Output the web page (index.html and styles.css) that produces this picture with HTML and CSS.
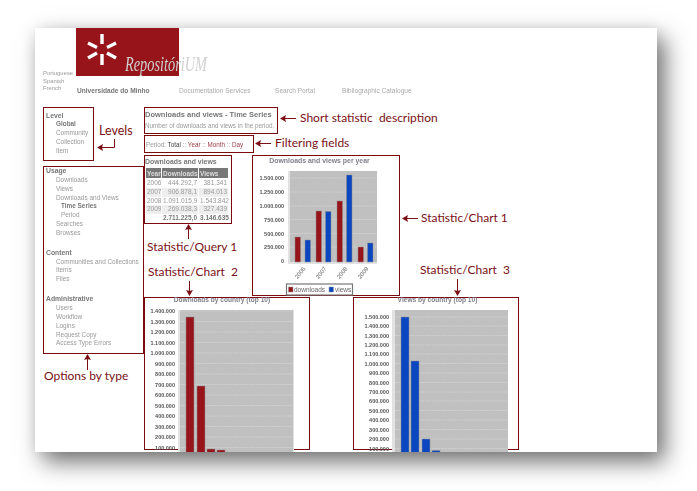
FILE: index.html
```html
<!DOCTYPE html>
<html lang="en">
<head>
    <meta charset="UTF-8">
    <title>Statistics add-on - Downloads and views</title>
    <link rel="stylesheet" href="styles.css">
</head>
<body>

<div class="sheet">

    <div class="header shot">
        <div class="langs">
            <div>Portuguese</div>
            <div>Spanish</div>
            <div>French</div>
        </div>
        <div class="brand">
            <div class="logo"></div>
            <div class="nav">
                <span class="nav-home">Universidade do Minho</span>
                <span class="nav-docs">Documentation Services</span>
                <span class="nav-search">Search Portal</span>
                <span>Bibliographic Catalogue</span>
            </div>
        </div>
    </div>

    <!-- logo drawn over the header, the wordmark runs past the red block -->
    <svg class="logo-mark shot" viewBox="76 28 170 50">
        <g stroke="#fff" stroke-width="3.400" stroke-linecap="butt">
            <line x1="102" y1="34" x2="102" y2="44"/>
            <line x1="102" y1="54" x2="102" y2="65"/>
            <line x1="88" y1="43" x2="97" y2="47.500"/>
            <line x1="116" y1="43" x2="107" y2="47.500"/>
            <line x1="88" y1="58" x2="97" y2="53"/>
            <line x1="116" y1="58" x2="107" y2="53"/>
        </g>
        <text class="logo-word" x="125" y="71" textLength="82" lengthAdjust="spacingAndGlyphs">RepositóriUM</text>
    </svg>

    <div class="content">
        <div class="side">
            <div class="box levels">
                <div class="menu shot">
                    <h4>Level</h4>
                    <a class="on">Global</a>
                    <a>Community</a>
                    <a>Collection</a>
                    <a>Item</a>
                </div>
            </div>
            <div class="box options">
                <div class="menu shot">
                    <h4>Usage</h4>
                    <a>Downloads</a>
                    <a>Views</a>
                    <a>Downloads and Views</a>
                    <a class="sub on">Time Series</a>
                    <a class="sub">Period</a>
                    <a>Searches</a>
                    <a>Browses</a>
                    <h4 class="next">Content</h4>
                    <a>Communities and Collections</a>
                    <a>Items</a>
                    <a>Files</a>
                    <h4 class="next">Administrative</h4>
                    <a>Users</a>
                    <a>Workflow</a>
                    <a>Logins</a>
                    <a>Request Copy</a>
                    <a>Access Type Errors</a>
                </div>
            </div>
        </div>

        <div class="main">
            <div class="box desc">
                <div class="shot">
                    <h3>Downloads and views - Time Series</h3>
                    <p>Number of downloads and views in the period.</p>
                </div>
            </div>
            <div class="box filter">
                <div class="shot">Period: <b>Total</b> :: <a>Year</a> :: <a>Month</a> :: <a>Day</a></div>
            </div>

            <div class="row row-top">
                <div class="box query">
                    <div class="shot">
                        <h3>Downloads and views</h3>
                        <table>
                            <tr><th class="c-year">Year</th><th class="c-down">Downloads</th><th class="c-views">Views</th></tr>
                            <tr><td>2006</td><td class="num">444.292,7</td><td class="num">381.341</td></tr>
                            <tr class="alt"><td>2007</td><td class="num">906.878,1</td><td class="num">894.013</td></tr>
                            <tr><td>2008</td><td class="num">1.091.015,9</td><td class="num">1.543.842</td></tr>
                            <tr class="alt"><td>2009</td><td class="num">269.038,3</td><td class="num">327.439</td></tr>
                            <tr class="total"><td></td><td class="num">2.711.225,0</td><td class="num">3.146.635</td></tr>
                        </table>
                    </div>
                </div>

                <div class="box chart-year">
                    <svg class="chart shot" viewBox="253 156 146 139">
                        <text class="chart-title title-year" x="319.500" y="163" text-anchor="middle">Downloads and views per year</text>
                        <rect class="axis-band" x="288" y="171" width="89" height="93"/>
                        <rect class="plot" x="290" y="171" width="87" height="91"/>
                        <g class="grid">
                            <line x1="290" x2="377" y1="178" y2="178"/>
                            <line x1="290" x2="377" y1="192" y2="192"/>
                            <line x1="290" x2="377" y1="206" y2="206"/>
                            <line x1="290" x2="377" y1="219.500" y2="219.500"/>
                            <line x1="290" x2="377" y1="233.500" y2="233.500"/>
                            <line x1="290" x2="377" y1="247" y2="247"/>
                        </g>
                        <g class="ticks" text-anchor="end">
                            <text x="284" y="180">1.500.000</text>
                            <text x="284" y="194">1.250.000</text>
                            <text x="284" y="208">1.000.000</text>
                            <text x="284" y="221.500">750.000</text>
                            <text x="284" y="235.500">500.000</text>
                            <text x="284" y="249">250.000</text>
                            <text x="284" y="263">0</text>
                        </g>
                        <g class="bar-red">
                            <rect x="295" y="237" width="5.500" height="25"/>
                            <rect x="316" y="211" width="5.500" height="51"/>
                            <rect x="337" y="201" width="5.500" height="61"/>
                            <rect x="358" y="247" width="5.500" height="15"/>
                        </g>
                        <g class="bar-blue">
                            <rect x="305" y="240" width="5.500" height="22"/>
                            <rect x="325.500" y="211.500" width="5.500" height="50.500"/>
                            <rect x="346.500" y="175" width="5.500" height="87"/>
                            <rect x="367.500" y="243" width="5.500" height="19"/>
                        </g>
                        <g class="years" text-anchor="end">
                            <text transform="translate(306 269) rotate(-50)">2006</text>
                            <text transform="translate(327 269) rotate(-50)">2007</text>
                            <text transform="translate(348 269) rotate(-50)">2008</text>
                            <text transform="translate(369 269) rotate(-50)">2009</text>
                        </g>
                        <rect class="legend" x="286.500" y="284" width="66" height="11"/>
                        <rect class="bar-red" x="288.500" y="287" width="4.500" height="5"/>
                        <text class="legend-text" x="294" y="292">downloads</text>
                        <rect class="bar-blue" x="329" y="287" width="4.500" height="5"/>
                        <text class="legend-text" x="335" y="292">views</text>
                    </svg>
                </div>
            </div>

            <div class="row row-bottom">
                <div class="box chart-country">
                    <svg class="chart shot" viewBox="145 298 164 152">
                        <text class="chart-title" x="222" y="302" text-anchor="middle">Downloads by country (top 10)</text>
                        <rect class="axis-band" x="178" y="310" width="116" height="145"/>
                        <rect class="plot" x="180" y="310" width="113" height="145"/>
                        <g class="grid">
                            <line x1="180" x2="293" y1="311" y2="311"/>
                            <line x1="180" x2="293" y1="321.500" y2="321.500"/>
                            <line x1="180" x2="293" y1="332" y2="332"/>
                            <line x1="180" x2="293" y1="342.500" y2="342.500"/>
                            <line x1="180" x2="293" y1="353" y2="353"/>
                            <line x1="180" x2="293" y1="363.500" y2="363.500"/>
                            <line x1="180" x2="293" y1="374" y2="374"/>
                            <line x1="180" x2="293" y1="384.500" y2="384.500"/>
                            <line x1="180" x2="293" y1="395" y2="395"/>
                            <line x1="180" x2="293" y1="405.500" y2="405.500"/>
                            <line x1="180" x2="293" y1="416" y2="416"/>
                            <line x1="180" x2="293" y1="426.500" y2="426.500"/>
                            <line x1="180" x2="293" y1="437" y2="437"/>
                            <line x1="180" x2="293" y1="447.500" y2="447.500"/>
                        </g>
                        <g class="ticks" text-anchor="end">
                            <text x="175" y="313">1.400.000</text>
                            <text x="175" y="323.500">1.300.000</text>
                            <text x="175" y="334">1.200.000</text>
                            <text x="175" y="344.500">1.100.000</text>
                            <text x="175" y="355">1.000.000</text>
                            <text x="175" y="365.500">900.000</text>
                            <text x="175" y="376">800.000</text>
                            <text x="175" y="386.500">700.000</text>
                            <text x="175" y="397">600.000</text>
                            <text x="175" y="407.500">500.000</text>
                            <text x="175" y="418">400.000</text>
                            <text x="175" y="428.500">300.000</text>
                            <text x="175" y="439">200.000</text>
                            <text x="175" y="449.500">100.000</text>
                        </g>
                        <g class="bar-red">
                            <rect x="186" y="317" width="8" height="140"/>
                            <rect x="197" y="386" width="8" height="70"/>
                            <rect x="207" y="449" width="8" height="7"/>
                            <rect x="217" y="450" width="8" height="6"/>
                        </g>
                    </svg>
                </div>

                <div class="box chart-country">
                    <svg class="chart shot" viewBox="354 298 164 152">
                        <text class="chart-title" x="437.500" y="302" text-anchor="middle">Views by country (top 10)</text>
                        <rect class="axis-band" x="392" y="310" width="116" height="145"/>
                        <rect class="plot" x="395" y="310" width="113" height="145"/>
                        <g class="grid">
                            <line x1="395" x2="508" y1="317" y2="317"/>
                            <line x1="395" x2="508" y1="326" y2="326"/>
                            <line x1="395" x2="508" y1="335.500" y2="335.500"/>
                            <line x1="395" x2="508" y1="345" y2="345"/>
                            <line x1="395" x2="508" y1="354" y2="354"/>
                            <line x1="395" x2="508" y1="363.500" y2="363.500"/>
                            <line x1="395" x2="508" y1="373" y2="373"/>
                            <line x1="395" x2="508" y1="382.500" y2="382.500"/>
                            <line x1="395" x2="508" y1="392" y2="392"/>
                            <line x1="395" x2="508" y1="401" y2="401"/>
                            <line x1="395" x2="508" y1="410.500" y2="410.500"/>
                            <line x1="395" x2="508" y1="420" y2="420"/>
                            <line x1="395" x2="508" y1="429.500" y2="429.500"/>
                            <line x1="395" x2="508" y1="439" y2="439"/>
                            <line x1="395" x2="508" y1="448.500" y2="448.500"/>
                        </g>
                        <g class="ticks" text-anchor="end">
                            <text x="389" y="319">1.500.000</text>
                            <text x="389" y="328">1.400.000</text>
                            <text x="389" y="337.500">1.300.000</text>
                            <text x="389" y="347">1.200.000</text>
                            <text x="389" y="356">1.100.000</text>
                            <text x="389" y="365.500">1.000.000</text>
                            <text x="389" y="375">900.000</text>
                            <text x="389" y="384.500">800.000</text>
                            <text x="389" y="394">700.000</text>
                            <text x="389" y="403">600.000</text>
                            <text x="389" y="412.500">500.000</text>
                            <text x="389" y="422">400.000</text>
                            <text x="389" y="431.500">300.000</text>
                            <text x="389" y="441">200.000</text>
                            <text x="389" y="450.500">100.000</text>
                        </g>
                        <g class="bar-blue">
                            <rect x="401" y="317" width="8" height="140"/>
                            <rect x="411" y="361" width="8" height="95"/>
                            <rect x="422" y="439" width="8" height="17"/>
                            <rect x="432" y="450.500" width="8" height="6"/>
                        </g>
                    </svg>
                </div>
            </div>
        </div>
    </div>

    <!-- callouts drawn on top of the screenshot -->
    <svg class="notes" viewBox="35 28 622 424">
        <text x="99" y="135" class="note-big">Levels</text>
        <text x="300" y="122">Short statistic &#160;description</text>
        <text x="275" y="147">Filtering fields</text>
        <text x="421" y="222">Statistic/Chart 1</text>
        <text x="147" y="251">Statistic/Query 1</text>
        <text x="148" y="276">Statistic/Chart &#160;2</text>
        <text x="420" y="274">Statistic/Chart &#160;3</text>
        <text x="44" y="380">Options by type</text>

        <path class="wire" d="M114.500 139V147.500H100"/>
        <path class="head" d="M97 147.500l6-3.500-1 3.500 1 3.500z"/>

        <path class="wire" d="M284 118.500H296"/>
        <path class="head" d="M280 118.500l6-3.500-1 3.500 1 3.500z"/>

        <path class="wire" d="M259 143.500H271"/>
        <path class="head" d="M255 143.500l6-3.500-1 3.500 1 3.500z"/>

        <path class="wire" d="M406 218.500H418"/>
        <path class="head" d="M402 218.500l6-3.500-1 3.500 1 3.500z"/>

        <path class="wire" d="M188.500 228V239"/>
        <path class="head" d="M188.500 224l3.500 6-3.500-1-3.500 1z"/>

        <path class="wire" d="M87.500 358V370"/>
        <path class="head" d="M87.500 354l3.500 6-3.500-1-3.500 1z"/>

        <path class="wire" d="M189.500 281V292"/>
        <path class="head" d="M189.500 296l3.500-6-3.500 1-3.500-1z"/>

        <path class="wire" d="M457.500 279V292"/>
        <path class="head" d="M457.500 296l3.500-6-3.500 1-3.500-1z"/>
    </svg>

</div>

</body>
</html>
```

FILE: styles.css
```css
html, body {
    margin: 0;
    height: 100%;
    overflow: hidden;
    background-color: #fff;
}
body {
    padding: 28px 0 0 35px;
    box-sizing: border-box;
    font-family: "Liberation Sans", Arial, sans-serif;
    font-size: 6.3px;
    color: #999;
}

.sheet {
    position: relative;
    width: 622px;
    height: 424px;
    overflow: hidden;
    background-color: #fff;
    box-shadow: 0 0 14px rgba(0, 0, 0, 0.07), 8px 10px 22px rgba(0, 0, 0, 0.55);
}

.shot {
    filter: blur(0.45px);
}

/* header */
.header {
    display: flex;
    height: 79px;
}
.langs {
    width: 33px;
    margin: 42px 0 0 8px;
    line-height: 7.7px;
    font-size: 5.9px;
}
.logo {
    width: 103px;
    height: 48px;
    background-color: #96141a;
}
.nav {
    display: flex;
    margin-top: 9.500px;
    padding-left: 1px;
    line-height: 10px;
    font-size: 6.6px;
    color: #aaa;
    white-space: nowrap;
}
.nav-home {
    width: 102px;
    font-weight: bold;
    color: #777;
}
.nav-docs {
    width: 96px;
}
.nav-search {
    width: 67px;
}
.logo-mark {
    position: absolute;
    left: 41px;
    top: 0;
    width: 170px;
    height: 50px;
}
.logo-word {
    font-family: "Liberation Serif", serif;
    font-style: italic;
    font-size: 21px;
    fill: #d0d0d0;
}

/* page body */
.content {
    display: flex;
    padding-left: 8px;
}
.side {
    display: flex;
    flex-direction: column;
    align-items: flex-start;
    gap: 5px;
    width: 101px;
    flex-shrink: 0;
}
.main {
    display: flex;
    flex-direction: column;
    align-items: flex-start;
}
.box {
    border: 1px solid #7a0c10;
    box-sizing: border-box;
}
.levels {
    width: 51px;
    height: 54px;
    padding-top: 3.500px;
}
.options {
    width: 101px;
    height: 188px;
}

.menu {
    padding-left: 2px;
    line-height: 8.850px;
    font-size: 6.4px;
    white-space: nowrap;
}
.menu h4 {
    margin: 0;
    font-size: 6.8px;
    color: #777;
}
.menu h4.next {
    margin-top: 11px;
}
.menu a {
    display: block;
    padding-left: 10px;
    color: #999;
}
.menu a.on {
    font-weight: bold;
    color: #777;
}
.menu a.sub {
    padding-left: 15px;
}

.desc {
    width: 134px;
    height: 27px;
    padding: 2px 0 0 0;
}
.desc h3, .query h3 {
    margin: 0;
    font-size: 6.9px;
    line-height: 9px;
    color: #777;
    white-space: nowrap;
}
.desc h3 {
    font-size: 7.500px;
}
.desc p {
    margin: 3px 0 0;
    line-height: 8px;
    white-space: nowrap;
}
.filter {
    width: 110px;
    height: 18px;
    margin-top: 1px;
    padding: 4px 0 0 1px;
    line-height: 9px;
    white-space: nowrap;
}
.filter b {
    font-weight: normal;
    color: #444;
}
.filter a {
    color: #a04048;
}

.row {
    display: flex;
    align-items: flex-start;
}
.row-top {
    gap: 20px;
    height: 141px;
    margin-top: 2px;
}
.row-bottom {
    gap: 43px;
    margin-top: 1px;
}

/* query table */
.query {
    width: 88px;
    height: 69px;
    padding: 1px 0 0 0;
}
.query h3 {
    margin-bottom: 2px;
}
.query table {
    border-collapse: separate;
    border-spacing: 1px 0;
    font-size: 6.5px;
    table-layout: fixed;
    width: 84px;
}
.query th {
    background-color: #777;
    color: #ddd;
    font-weight: bold;
    text-align: left;
    height: 10px;
    padding: 0 1px;
    line-height: 9px;
    border-bottom: 1px solid #fff;
}
.c-year { width: 13px; }
.c-down { width: 34px; }
.query td {
    height: 8.800px;
    padding: 0 1px;
    line-height: 8.800px;
    white-space: nowrap;
}
.query td.num {
    text-align: right;
}
.query tr.alt td {
    background-color: #eee;
}
.query tr.total td {
    font-weight: bold;
    color: #777;
}

/* charts */
.chart-year {
    width: 148px;
    height: 141px;
}
.chart-country {
    width: 166px;
    height: 153px;
}
.chart {
    display: block;
    overflow: visible;
}
.chart-year .chart {
    width: 146px;
    height: 139px;
}
.chart-country .chart {
    width: 164px;
    height: 152px;
}
.chart-title {
    font-size: 6.600px;
    font-weight: bold;
    fill: #80808c;
}
.title-year {
    font-size: 6.900px;
}
.plot {
    fill: #c0c0c0;
}
.axis-band {
    fill: #e2e2e2;
}
.grid line {
    stroke: #dcdcdc;
    stroke-width: 0.6;
    stroke-dasharray: 1.500 0.800;
}
.ticks text {
    font-size: 5.500px;
    font-weight: bold;
    fill: #555;
}
.bar-red rect, rect.bar-red {
    fill: #96141a;
    stroke: #8c8c8c;
    stroke-width: 0.5;
}
.bar-blue rect, rect.bar-blue {
    fill: #0a46c0;
    stroke: #8c8c8c;
    stroke-width: 0.5;
}
.years text {
    font-size: 6px;
    fill: #666;
}
.legend {
    fill: #fff;
    stroke: #777;
    stroke-width: 1.200;
}
.legend-text {
    font-size: 6.500px;
    fill: #666;
}

/* callouts */
.notes {
    position: absolute;
    left: 0;
    top: 0;
    width: 622px;
    height: 424px;
}
.notes text {
    font-family: Lato, "Open Sans", sans-serif;
    font-size: 12px;
    fill: #7a1015;
}
.notes .note-big {
    font-size: 12.500px;
}
.wire {
    fill: none;
    stroke: #7a1015;
    stroke-width: 1;
}
.head {
    fill: #7a1015;
}
```
